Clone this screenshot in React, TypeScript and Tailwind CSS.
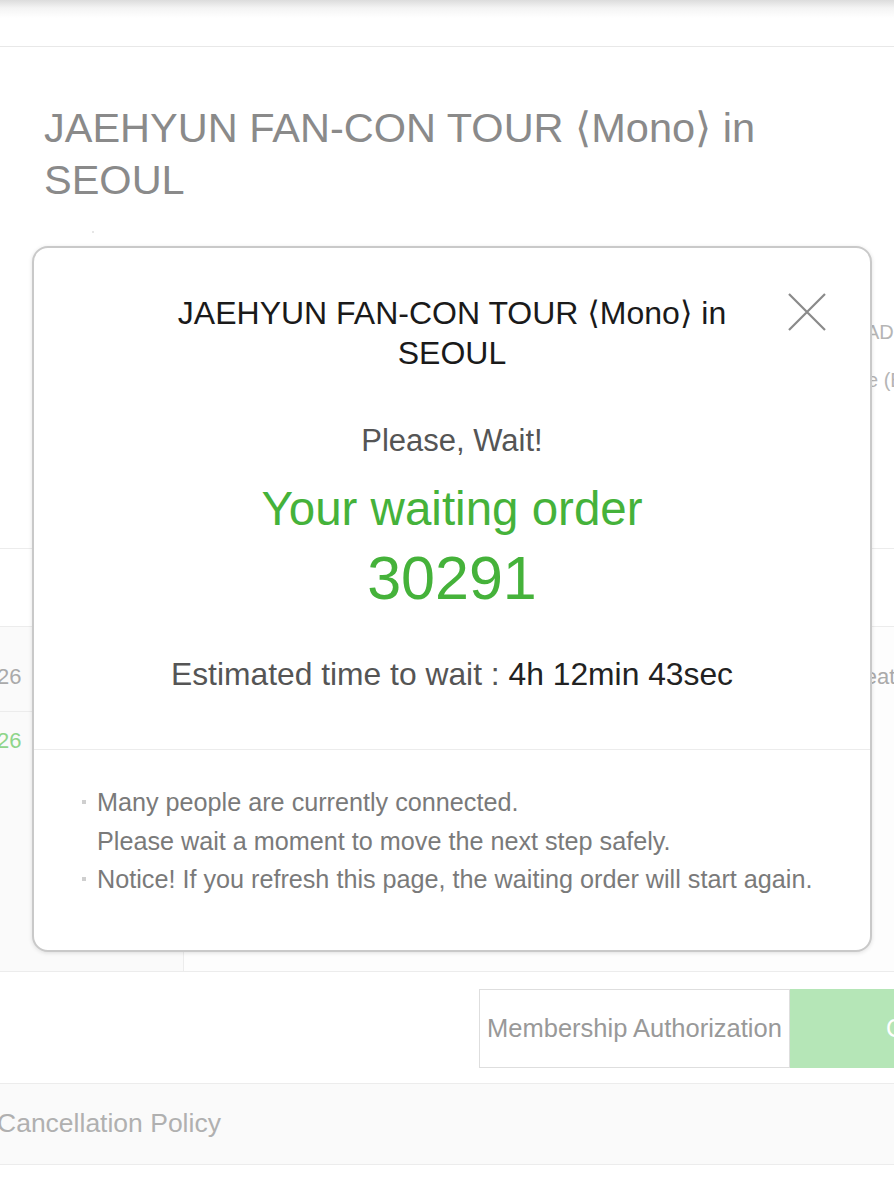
import React from 'react';

const CloseIcon: React.FC = () => (
  <svg width="38" height="38" viewBox="0 0 38 38" fill="none" stroke="#8a8a8a" strokeWidth="2.2">
    <path d="M1 1 L37 37 M37 1 L1 37" />
  </svg>
);

const Bullet: React.FC = () => (
  <span className="w-[15px] shrink-0 pt-[17px]">
    <span className="block w-[4px] h-[4px] bg-[#cfcfcf]" />
  </span>
);

const WaitingModal: React.FC = () => (
  <div className="absolute left-[32px] top-[246px] w-[840px] h-[706px] bg-white border-2 border-[#c9c9c9] rounded-[16px] shadow-[0_1px_4px_rgba(0,0,0,0.12)]">
    <button className="absolute top-[45px] right-[44px]" aria-label="close">
      <CloseIcon />
    </button>
    <div className="flex flex-col items-center text-center pt-[45px]">
      <h2 className="px-[110px] text-[32px] leading-[40px] text-[#1a1a1a]">
        JAEHYUN FAN-CON TOUR ⟨Mono⟩ in SEOUL
      </h2>
      <p className="mt-[48px] text-[31px] leading-[40px] text-[#555]">Please, Wait!</p>
      <p className="mt-[20px] text-[47.5px] leading-[56px] text-[#45b23a]">Your waiting order</p>
      <p className="mt-[8px] text-[61px] leading-[66px] text-[#45b23a]">30291</p>
      <p className="mt-[43px] text-[31.8px] leading-[40px] text-[#555]">
        Estimated time to wait : <span className="text-[#222]">4h 12min 43sec</span>
      </p>
    </div>
    <div className="mt-[55px] border-t border-[#ececec] pt-[33px] pl-[48px] text-[25.2px] leading-[38.5px] text-[#7a7a7a]">
      <div className="flex">
        <Bullet />
        <div>
          <p>Many people are currently connected.</p>
          <p>Please wait a moment to move the next step safely.</p>
        </div>
      </div>
      <div className="flex">
        <Bullet />
        <p>Notice! If you refresh this page, the waiting order will start again.</p>
      </div>
    </div>
  </div>
);

export default function App() {
  return (
    <div className="relative w-[894px] h-[1199px] overflow-hidden bg-white" style={{ fontFamily: '"Liberation Sans", "DejaVu Sans", Arial, sans-serif' }}>
      {/* header */}
      <div className="h-[47px] bg-[linear-gradient(to_bottom,#dcdcdc_0px,#f4f4f4_8px,#ffffff_18px)] border-b border-[#e8e8e8]" />

      {/* title */}
      <div className="pt-[55px] pl-[44px] pr-[30px]">
        <h1 className="text-[41.5px] leading-[52px] text-[#8a8a8a]">JAEHYUN FAN-CON TOUR ⟨Mono⟩ in SEOUL</h1>
      </div>

      {/* info area */}
      <div className="h-[342px] relative overflow-hidden">
        <div className="absolute left-[92px] top-[25px] w-[2px] h-[2px] bg-[#e6e6e6]" />
        <div className="pl-[866px] pt-[112px] whitespace-nowrap text-[20px] text-[#b5b5b5]">
          <p className="leading-[28px]">ADULT</p>
          <p className="mt-[20px] leading-[28px] flex items-center">
            <span className="inline-block w-[14px] border-t border-dotted border-[#bbb] mr-[1px]" />e (B
          </p>
        </div>
      </div>

      {/* tab row */}
      <div className="h-[78px] border-t border-[#ececec]" />

      {/* schedule table */}
      <div className="flex border-t border-[#ececec] h-[346px] border-b overflow-hidden">
        <div className="w-[184px] shrink-0 bg-[#fafafa] border-r border-[#ececec]">
          <div className="h-[85px] border-b border-[#ececec] pt-[36px] text-[22px] leading-[28px] text-[#aaa]">
            <span className="-ml-[3px]">26</span>
          </div>
          <div className="pt-[15px] text-[22px] leading-[28px] text-[#8fd58a]">
            <span className="-ml-[3px]">26</span>
          </div>
        </div>
        <div className="flex-1 min-w-0 bg-[#fdfdfd] whitespace-nowrap">
          <div className="pl-[666px] pt-[36px] text-[22px] leading-[28px] text-[#aaa]">Seat</div>
        </div>
      </div>

      {/* buttons */}
      <div className="h-[112px] flex justify-end items-start pt-[17px] border-b border-[#ececec] overflow-hidden">
        <div className="ml-auto flex -mr-[30px]">
          <div className="w-[311px] h-[79px] border border-[#dedede] flex items-center justify-center text-[25.5px] text-[#999]">
            Membership Authorization
          </div>
          <div className="w-[134px] h-[79px] bg-[#b5e6b7] flex items-center pl-[96px] text-[25px] text-white">
            C
          </div>
        </div>
      </div>

      {/* cancellation */}
      <div className="h-[81px] bg-[#fafafa] border-b border-[#ececec] flex items-center">
        <span className="-ml-[3px] text-[26.5px] text-[#b0b0b0]">Cancellation Policy</span>
      </div>

      <WaitingModal />
    </div>
  );
}
